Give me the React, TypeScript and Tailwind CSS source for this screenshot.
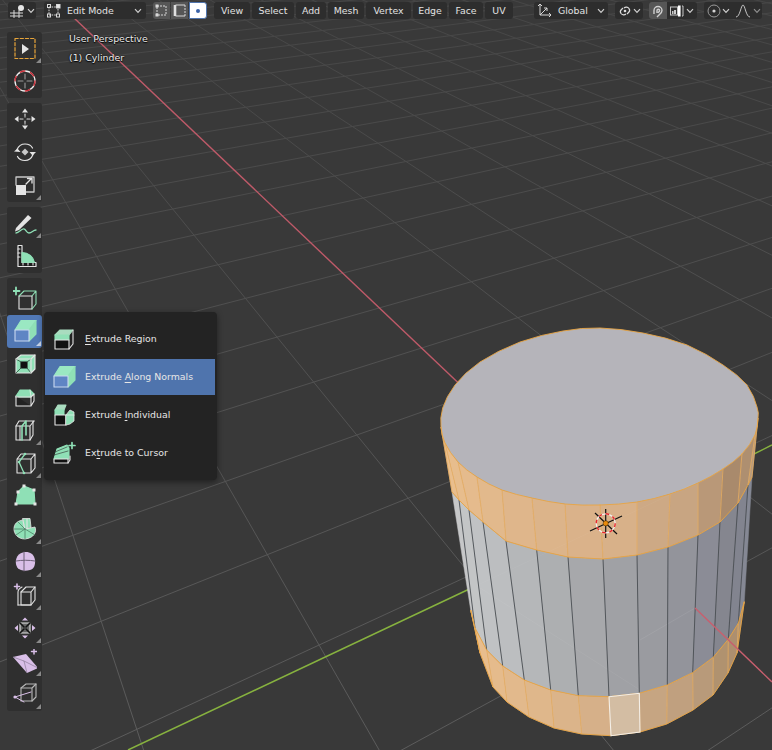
import React from "react";

const W = "#e4e4e4";
const M = "#8fe0b6";
const L = "#d9bfe8";

const VPR: [number, number] = [-175, -218];
const VPG: [number, number] = [2120, -188];

function greenPoint(t: number): [number, number] {
  const x = 606.5 - (118.7 * t) / (1 - 0.0784 * t);
  return [x, 523 - 0.47 * (x - 606.5)];
}
function redPoint(v: number): [number, number] {
  const x = -175 + 781.5 / v;
  return [x, 523 + 0.948 * (x - 606.5)];
}
function ext(vp: [number, number], p: [number, number]) {
  return { x1: vp[0], y1: vp[1], x2: vp[0] + (p[0] - vp[0]) * 6, y2: vp[1] + (p[1] - vp[1]) * 6 };
}

const gridA: any[] = [];
for (let t = -45; t <= 5; t++) if (t !== 0) gridA.push(ext(VPR, greenPoint(t)));
const gridB: any[] = [];
for (let j = -4; j <= 70; j++) gridB.push(ext(VPG, redPoint(1.01 + 0.0998 * j)));

type P = [number, number];
const R: P[] = [[441,427],[445,443],[458,462],[477,477],[502,490],[532,498],[565,504],[600,504],[637,502],[670,494],[698,483],[723,468],[742,453],[755,435],[758,418]];
const T: P[] = [[452,492],[459,500],[469,510],[483,522],[506,541],[536.7,550],[568,557],[603,559],[637,555],[668,547],[698,535],[720,522],[738,503],[748,485],[752,477]];
const B: P[] = [[470.7,610],[475,628],[486.7,650],[502.7,666],[524.3,680],[550.7,690],[578.3,695.7],[609,696.7],[639.3,693.3],[667.3,685],[692.7,672.7],[713.3,657.3],[728.3,639.3],[738.3,623.3],[744.3,601.7]];
const C: P[] = [[470.7,610],[480,653],[493,687],[507,702],[529,717],[554,728],[581.7,734],[611,735.7],[640,732],[666.7,724],[693,710],[713,695],[728,673],[737,653],[744.3,601.7]];
const topCtrl: P[] = [[441,427],[442.7,408],[455,385],[480,362],[520,342],[563,331],[600,328],[643,333],[687,345],[723,365],[747,385],[757,407],[758,418],[755,435],[742,454],[723,469],[698,483],[670,494],[637,502],[600,505],[565,504],[532,498],[502,490],[477,477],[458,462],[445,443]];

function smoothRing(a: P[]): P[] {
  const out: P[] = [];
  const n = a.length;
  for (let i = 0; i < n; i++) {
    const p0 = a[(i - 1 + n) % n];
    const p1 = a[i];
    const p2 = a[(i + 1) % n];
    const p3 = a[(i + 2) % n];
    out.push(p1);
    out.push([(-p0[0] + 9 * p1[0] + 9 * p2[0] - p3[0]) / 16, (-p0[1] + 9 * p1[1] + 9 * p2[1] - p3[1]) / 16]);
  }
  return out;
}
const topRim = smoothRing(topCtrl);

const bandCols = ["#e9be8d","#e7bd8d","#e5bb8d","#e2b98c","#dfb68b","#dcb48a","#dab28a","#d8b189","#cda985","#c8a582","#b99878","#a98a6c","#ae8f70","#b79a7c"];
const bodyCols = ["#c6c7c8","#c3c5c6","#c0c2c4","#bcbec0","#b5b7b9","#adafb1","#a7a8ab","#a0a1a5","#9a9ba0","#93949b","#8b8c96","#85868f","#82848f","#858894"];
const lowCols = ["#eabf8e","#e8bd8d","#e5bb8c","#e2b98c","#dfb78b","#dbb48a","#d6b089","#d3bda3","#c6a582","#c0a07f","#b89a7a","#b0926f","#ad8f6f","#b09372"];

const pts = (a: P[]) => a.map((p) => p.join(",")).join(" ");

function Scene() {
  return (
    <svg className="absolute inset-0" width="772" height="750" viewBox="0 0 772 750">
      <defs>
        <linearGradient id="gridFade" gradientUnits="userSpaceOnUse" x1="0" y1="0" x2="0" y2="750">
          <stop offset="0" stopColor="#464646" />
          <stop offset="0.45" stopColor="#505050" />
          <stop offset="1" stopColor="#5c5c5c" />
        </linearGradient>
      </defs>
      <g stroke="url(#gridFade)" strokeWidth="1">
        {gridA.map((l, i) => <line key={i} {...l} />)}
        {gridB.map((l, i) => <line key={i} {...l} />)}
      </g>
      <line x1="73" y1="17" x2="470" y2="394" stroke="#bf5a69" strokeWidth="1.4" />
      <line x1="128" y1="750" x2="480" y2="584" stroke="#87b23f" strokeWidth="1.5" />
      <line x1="750" y1="456" x2="772" y2="445" stroke="#87b23f" strokeWidth="1.5" />

      {bodyCols.map((c, i) => (
        <polygon key={i} points={pts([T[i], T[i + 1], B[i + 1], B[i]])} fill={c} stroke={c} strokeWidth="0.5" />
      ))}
      {bandCols.map((c, i) => (
        <polygon key={i} points={pts([R[i], R[i + 1], T[i + 1], T[i]])} fill={c} stroke={c} strokeWidth="0.5" />
      ))}
      {lowCols.map((c, i) => (
        <polygon key={i} points={pts([B[i], B[i + 1], C[i + 1], C[i]])} fill={c} stroke={c} strokeWidth="0.5" />
      ))}
      <polygon points={pts(topRim)} fill="#b5b4ba" />

      <line x1="480" y1="584" x2="695" y2="483" stroke="#ffffff" strokeOpacity="0.04" />
      <line x1="477" y1="586" x2="640" y2="690" stroke="#ffffff" strokeOpacity="0.05" />
      <line x1="640" y1="640" x2="695" y2="608" stroke="#ffffff" strokeOpacity="0.07" />

      <g stroke="#4b4f54" strokeWidth="0.9">
        {T.map((p, i) => (i > 0 && i < T.length - 1 ? <line key={i} x1={p[0]} y1={p[1]} x2={B[i][0]} y2={B[i][1]} /> : null))}
      </g>
      <g stroke="#e9ae62" strokeWidth="0.8" fill="none">
        {R.map((p, i) => <line key={i} x1={p[0]} y1={p[1]} x2={T[i][0]} y2={T[i][1]} />)}
        {B.map((p, i) => <line key={i} x1={p[0]} y1={p[1]} x2={C[i][0]} y2={C[i][1]} />)}
      </g>
      <g stroke="#e9a543" strokeWidth="0.9" fill="none">
        <polyline points={pts(T)} />
        <polyline points={pts(B)} />
        <polyline points={pts(C)} />
        <polygon points={pts(topRim)} />
      </g>
      <polygon points={pts([B[7], B[8], C[8], C[7]])} fill="#d3bda3" stroke="#f4efe8" strokeWidth="1.1" />

      <line x1="695" y1="608" x2="772" y2="682" stroke="#c95f6e" strokeWidth="1.4" />

      <g>
        <g stroke="#111" strokeWidth="1.2">
          <line x1="605.7" y1="509" x2="605.7" y2="538" />
          <line x1="590" y1="531" x2="622" y2="516" />
          <line x1="595" y1="513" x2="617" y2="534" />
        </g>
        <circle cx="605.7" cy="523.3" r="9.5" fill="none" stroke="#f2f2f2" strokeWidth="1.3" />
        <circle cx="605.7" cy="523.3" r="9.5" fill="none" stroke="#e8262a" strokeWidth="1.4" strokeDasharray="3.7 3.7" />
        <circle cx="605.7" cy="523.3" r="2.6" fill="#e88a0c" stroke="#3a2500" strokeWidth="0.5" />
      </g>
    </svg>
  );
}

function Ic({ children, s = 24 }: { children: React.ReactNode; s?: number }) {
  return (
    <svg width={s} height={s} viewBox="0 0 24 24" fill="none" stroke={W} strokeWidth="1.1" strokeLinejoin="round" strokeLinecap="round">
      {children}
    </svg>
  );
}

function Chevron({ className = "" }: { className?: string }) {
  return (
    <svg width="8" height="6" viewBox="0 0 8 6" fill="none" stroke="#cfcfcf" strokeWidth="1.2" className={className}>
      <path d="M1 1.2 L4 4.4 L7 1.2" />
    </svg>
  );
}

const Select = () => (
  <Ic>
    <rect x="2" y="2.5" width="20" height="20" stroke="#e8a53a" strokeWidth="1.2" strokeDasharray="3.2 2" />
    <polygon points="9,8 9,18 16,13" fill={W} stroke="none" />
  </Ic>
);
const Cursor3D = () => (
  <Ic>
    <circle cx="12" cy="12" r="10" stroke="#f0f0f0" strokeWidth="1.3" />
    <circle cx="12" cy="12" r="10" stroke="#c92b36" strokeWidth="1.4" strokeDasharray="4.6 5.9" />
    <path d="M12 5v5M12 14v5M5 12h5M14 12h5" stroke="#9a9a9a" />
  </Ic>
);
const Move = () => (
  <Ic>
    <path d="M12 1.5l3 4h-6zM12 22.5l-3-4h6zM1.5 12l4-3v6zM22.5 12l-4 3v-6z" fill={W} stroke="none" />
    <path d="M12 7v3M12 14v3M7 12h3M14 12h3" strokeDasharray="1.5 1" />
  </Ic>
);
const Rotate = () => (
  <Ic>
    <path d="M4 9.5C6 5 9 4 12 4s6 1 7.5 4M20 14.5c-2 5-5 6-8 6s-6-1-7.5-4" strokeWidth="1.2" />
    <path d="M1 11.5l3.5-3 3 3.5zM23 12l-3.5 3.5-3-3.5z" fill={W} stroke="none" />
    <path d="M12 8.5l3.5 3.5-3.5 3.5-3.5-3.5z" fill="#c9c9c9" stroke="none" />
  </Ic>
);
const Scale = () => (
  <Ic>
    <path d="M3 12V4h18v15h-8" stroke="#c8c8c8" strokeWidth="1.3" />
    <rect x="3" y="12" width="10" height="10" fill={W} stroke="none" />
    <path d="M13 11l5-5M14.5 5.5H19V10" strokeWidth="1.3" />
  </Ic>
);
const Annotate = () => (
  <Ic>
    <path d="M3 17L15 4l3.5 3L6 19l-4 1.5z" fill={W} stroke="none" />
    <path d="M3 22c3 0 4-3 7-4s3 4 6 4 4-3 7-3" stroke={M} strokeWidth="1.3" />
  </Ic>
);
const Measure = () => (
  <Ic>
    <path d="M5 1.5h4v17h14v4H5z" fill="#1e1e1e" stroke={W} strokeWidth="1.2" />
    <path d="M9 8.5c6.5 0 11.5 4.5 12.5 10H9z" fill={M} stroke={M} />
    <path d="M5 5h2M5 9h2M5 13h2M10 21v-2M15 21v-2M20 21v-2" />
  </Ic>
);
const AddCube = () => (
  <Ic>
    <path d="M3 1.5v7M-0.5 5h7" stroke={M} strokeWidth="1.8" />
    <path d="M6 10h13v13H6z" stroke={W} />
    <path d="M6 10l5-5h12l-4 5M19 23l4-5V5" stroke={M} strokeWidth="1.1" />
  </Ic>
);
const Extrude = () => (
  <Ic>
    <polygon points="2,11 8,1.5 23,1.5 16,11" fill="#9ae8c2" stroke="#9ae8c2" />
    <polygon points="16,11 23,1.5 23,15 16,22" fill={M} stroke={M} />
    <rect x="2" y="11" width="14" height="11" fill="#5f85c4" stroke="#c8d8f0" />
  </Ic>
);
const ExtrudeRegion = () => (
  <Ic>
    <polygon points="3,8 8,3 21,3 17,8" fill="#a9dcbf" stroke="#a9dcbf" />
    <rect x="3" y="8" width="14" height="5" fill={M} stroke={M} />
    <rect x="3" y="13" width="14" height="9" fill="#111" stroke={W} />
    <path d="M17 22l4-5V3" stroke={W} />
  </Ic>
);
const ExtrudeInd = () => (
  <Ic>
    <polygon points="3,7 6,2 14,2 12,7" fill="#a9dcbf" stroke="#a9dcbf" />
    <rect x="3" y="7" width="9" height="5" fill={M} stroke={M} />
    <rect x="3" y="12" width="11" height="10" fill="#111" stroke={W} />
    <polygon points="14,12 18,7 22,9 22,18 18,21 14,22" fill={M} stroke={W} strokeWidth="0.8" />
    <path d="M14 12h8" stroke="#cfeedd" />
  </Ic>
);
const ExtrudeCur = () => (
  <Ic>
    <path d="M20 1.5v6M17 4.5h6" stroke={M} strokeWidth="1.7" />
    <path d="M2 18L5 8l10-4 2 3 0 11z" fill={M} stroke={M} />
    <path d="M2 14l14-4M3 11l12-5" stroke="#2e2e2e" strokeWidth="0.6" />
    <path d="M2 18h14v4H2z" fill="#111" stroke={W} />
    <path d="M16 22l2-3v-4" stroke={W} />
  </Ic>
);
const Inset = () => (
  <Ic>
    <polygon points="3,7 8,3 22,3 22,17 18,21 3,21" fill={M} stroke={W} />
    <rect x="8" y="10" width="6" height="6" fill="#111" stroke="#111" />
    <path d="M3 7l5 3M18 21l-4-5M18 7l-4 3M3 21l5-5" stroke="#2e4d3c" strokeWidth="0.8" />
    <path d="M3 7h15v14M18 7l4-4" stroke={W} />
  </Ic>
);
const Bevel = () => (
  <Ic>
    <path d="M3 11l4-6h10l4 4-3 3H3z" fill={M} stroke={M} />
    <path d="M17 5l1 7" stroke="#cfeedd" />
    <path d="M3 11v10h15V12l3-3v7l-3 5" stroke={W} fill="#222" />
    <path d="M3 12h15" stroke={W} />
  </Ic>
);
const LoopCut = () => (
  <Ic>
    <path d="M3 8l3-5h15l-1 0v14l-3 5H3z" stroke={W} />
    <path d="M3 8h14v14M17 8l4-5" stroke={W} />
    <path d="M9 22V8l4-5v14" stroke={M} strokeWidth="1.6" />
    <path d="M7 22V8" stroke={W} />
  </Ic>
);
const Knife = () => (
  <Ic>
    <path d="M4 8h14v14H4zM4 8l4-5h14v14l-4 5M18 8l4-5" stroke={W} />
    <path d="M12 3L6 11l5 11" stroke={M} strokeWidth="1.3" />
    <circle cx="12" cy="3" r="1.3" fill={M} stroke="none" />
    <circle cx="6" cy="11" r="1.3" fill={M} stroke="none" />
    <circle cx="11" cy="22" r="1.3" fill={M} stroke="none" />
  </Ic>
);
const PolyBuild = () => (
  <Ic>
    <polygon points="11,2 21,6 22,20 3,20 5,8" fill={M} stroke={M} />
    <g fill={W} stroke="none">
      <rect x="9.5" y="0.5" width="3" height="3" />
      <rect x="19.5" y="4.5" width="3" height="3" />
      <rect x="20.5" y="18.5" width="3" height="3" />
      <rect x="1.5" y="18.5" width="3" height="3" />
      <rect x="3.5" y="6.5" width="3" height="3" />
    </g>
  </Ic>
);
const Spin = () => (
  <Ic>
    <path d="M12 12L9.5 1.5H17L18 10zM12 12l10-2c2 5-1 11-10 12C5 22 1 17 1 12S4 4 9.5 3z" fill={M} stroke={W} strokeWidth="0.8" />
    <path d="M12 12L22 18M12 12l0 10M12 12L3 18M12 12H1M12 12L5 5" stroke="#4d7f65" strokeWidth="0.8" />
    <path d="M14 2v9" stroke={W} />
  </Ic>
);
const Smooth = () => (
  <Ic>
    <path d="M3 10C4 4 9 2 13 2s8 2 9 8c.5 5-1 9-5 10s-8 1-11-1-3.5-6-3-9z" fill={L} stroke="none" />
    <path d="M3 11c6-1 13-1 19 0M11 2v19" stroke="#6d6077" strokeWidth="1" />
  </Ic>
);
const Slide = () => (
  <Ic>
    <path d="M4 1v5M1.5 3.5h5" stroke={L} strokeWidth="1.6" />
    <path d="M5 22V9c0-2 2-4 4-5M8 22V9l5-5h9v13l-4 5z" stroke={W} />
    <path d="M8 9h10v13H5M18 9l4-5" stroke={W} />
  </Ic>
);
const Shrink = () => (
  <Ic>
    <path d="M7 7h10v10H7z" fill="#666" stroke={W} />
    <path d="M7 7l4 4M17 7l-4 4M7 17l4-4M17 17l-4-4" stroke="#111" strokeWidth="1.6" />
    <path d="M12 1.5l3 3H9zM12 22.5l-3-3h6zM1.5 12l3.5-3v6zM22.5 12l-3.5 3V9z" fill={L} stroke="none" />
  </Ic>
);
const Shear = () => (
  <Ic>
    <path d="M21 0v5M18.5 2.5h6" stroke={L} strokeWidth="1.5" />
    <polygon points="0,8 13,5 25,19 14,24" fill={L} stroke="none" />
    <path d="M0 8l11 4 3 12M11 12l14 7" stroke="#8d7d98" strokeWidth="0.7" />
  </Ic>
);
const Rip = () => (
  <Ic>
    <path d="M8 6l5-4h10v13l-4 4H8z" stroke="#b8b8b8" />
    <path d="M8 6h11v13M19 6l4-4" stroke="#b8b8b8" />
    <path d="M2 15l16-5M2 15l9 5" stroke={L} strokeWidth="1" />
    <circle cx="2" cy="15" r="1.6" fill={L} stroke="none" />
  </Ic>
);

function Tool({ children, corner, active }: { children: React.ReactNode; corner?: boolean; active?: boolean }) {
  return (
    <div className={`relative h-[33px] pb-[2px] flex items-center justify-center ${active ? "bg-[#5178b5] rounded-[3px]" : ""}`}>
      {children}
      {corner ? (
        <svg width="5" height="5" viewBox="0 0 5 5" className="absolute right-[1px] bottom-[2px]">
          <polygon points="5,0 5,5 0,5" fill={active ? "#c8d4e8" : "#8a8a8a"} />
        </svg>
      ) : null}
    </div>
  );
}

function Group({ children, className = "" }: { children: React.ReactNode; className?: string }) {
  return <div className={`w-[35px] bg-[#2f2f2f] rounded-[3px] flex flex-col ${className}`}>{children}</div>;
}

function Toolbar() {
  return (
    <div className="flex flex-col gap-[5px] pt-[13px] pl-[7px] w-[69px] shrink-0">
      <Group>
        <Tool corner><Select /></Tool>
        <Tool><Cursor3D /></Tool>
      </Group>
      <Group>
        <Tool><Move /></Tool>
        <Tool><Rotate /></Tool>
        <Tool corner><Scale /></Tool>
      </Group>
      <Group>
        <Tool corner><Annotate /></Tool>
        <Tool><Measure /></Tool>
      </Group>
      <Group className="pt-[4px]">
        <Tool><AddCube /></Tool>
        <Tool corner active><Extrude /></Tool>
        <Tool><Inset /></Tool>
        <Tool><Bevel /></Tool>
        <Tool corner><LoopCut /></Tool>
        <Tool corner><Knife /></Tool>
        <Tool><PolyBuild /></Tool>
        <Tool corner><Spin /></Tool>
        <Tool corner><Smooth /></Tool>
        <Tool corner><Slide /></Tool>
        <Tool corner><Shrink /></Tool>
        <Tool corner><Shear /></Tool>
        <Tool corner><Rip /></Tool>
      </Group>
    </div>
  );
}

function Item({ icon, active, children }: { icon: React.ReactNode; active?: boolean; children: React.ReactNode }) {
  return (
    <div className={`h-[36px] mb-[2px] flex items-center pl-[7px] ${active ? "bg-[#4f74ad]" : ""}`}>
      <span className="w-[33px] flex items-center">{icon}</span>
      <span className="text-[#e6e6e6]">{children}</span>
    </div>
  );
}

function Popup() {
  return (
    <div className="absolute left-[44px] top-[312px] w-[173px] h-[168px] bg-[#232323] rounded-[4px] pt-[9px] pl-[1px] pr-[2px] shadow-[0_2px_6px_rgba(0,0,0,0.45)]">
      <Item icon={<ExtrudeRegion />}><u className="underline-offset-2">E</u>xtrude Region</Item>
      <Item active icon={<Extrude />}>Extrude <u className="underline-offset-2">A</u>long Normals</Item>
      <Item icon={<ExtrudeInd />}>Extrude <u className="underline-offset-2">I</u>ndividual</Item>
      <Item icon={<ExtrudeCur />}>Ex<u className="underline-offset-2">t</u>rude to Cursor</Item>
    </div>
  );
}

function Menu({ w, children }: { w: string; children: React.ReactNode }) {
  return <div className={`${w} h-[17px] bg-[#2d2d2d] rounded-[3px] flex items-center justify-center text-[#e2e2e2]`}>{children}</div>;
}

function Header() {
  return (
    <div className="relative flex items-center h-[19px] pt-[2px] pl-[8px]">
      <div className="w-[28px] h-[17px] bg-[#2d2d2d] rounded-[3px] flex items-center justify-center gap-[1px]">
        <svg width="16" height="14" viewBox="0 0 16 14" fill="none" stroke="#d8d8d8" strokeWidth="1">
          <path d="M0 9h13M0 12h13M4 6v8M9 6v8" />
          <circle cx="11" cy="4" r="3" fill="#e6e6e6" stroke="none" />
        </svg>
        <Chevron />
      </div>
      <div className="ml-[8px] w-[102px] h-[17px] bg-[#2d2d2d] rounded-[3px] flex items-center pl-[3px] pr-[4px] text-[#e2e2e2]">
        <svg width="14" height="14" viewBox="0 0 14 14" fill="none" stroke="#d8d8d8" strokeWidth="1">
          <path d="M2 3h8M2 11h8M2 3v8M11 5v5" strokeDasharray="1.6 1" />
          <rect x="0.5" y="0.5" width="3" height="3" />
          <rect x="9.5" y="0.5" width="3.5" height="3.5" fill="#e6e6e6" />
          <rect x="0.5" y="10" width="3" height="3" />
          <rect x="9.5" y="10" width="3" height="3" />
        </svg>
        <span className="ml-[6px] flex-1">Edit Mode</span>
        <Chevron />
      </div>
      <div className="ml-[7px] flex gap-[1px]">
        <div className="w-[17px] h-[17px] bg-[#565656] rounded-l-[3px] flex items-center justify-center">
          <svg width="13" height="13" viewBox="0 0 13 13" fill="none" stroke="#d8d8d8">
            <path d="M2 2h9v9H2z" strokeDasharray="2 1" />
            <rect x="0.5" y="0.5" width="3" height="3" fill="#d8d8d8" stroke="none" />
            <rect x="0.5" y="9.5" width="3" height="3" fill="#d8d8d8" stroke="none" />
          </svg>
        </div>
        <div className="w-[17px] h-[17px] bg-[#565656] flex items-center justify-center">
          <svg width="13" height="13" viewBox="0 0 13 13" fill="none" stroke="#d8d8d8">
            <path d="M2.5 1H12M2.5 12H12" />
            <path d="M2 1v11" strokeWidth="2.6" stroke="#e0e0e0" />
            <path d="M12 1v11" strokeDasharray="2 1" />
          </svg>
        </div>
        <div className="w-[18px] h-[17px] bg-white border-[1.5px] border-[#4f74ad] rounded-r-[3px] flex items-center justify-center">
          <span className="w-[4px] h-[4px] rounded-full bg-[#3a62a8]" />
        </div>
      </div>
      <div className="ml-[7px] flex gap-[2px]">
        <Menu w="w-[36px]">View</Menu>
        <Menu w="w-[42px]">Select</Menu>
        <Menu w="w-[30px]">Add</Menu>
        <Menu w="w-[36px]">Mesh</Menu>
        <Menu w="w-[45px]">Vertex</Menu>
        <Menu w="w-[34px]">Edge</Menu>
        <Menu w="w-[34px]">Face</Menu>
        <Menu w="w-[28px]">UV</Menu>
      </div>
      <div className="ml-[21px] w-[74px] h-[17px] bg-[#2d2d2d] rounded-[3px] flex items-center pl-[2px] pr-[3px] text-[#e2e2e2]">
        <svg width="16" height="16" viewBox="0 0 16 16" fill="none" stroke="#d8d8d8" strokeWidth="1">
          <path d="M4 1v11h11M4 12l7-7M2 3l2-2 2 2M13 10l2 2-2 2M8 5h3v3" />
        </svg>
        <span className="ml-[6px] flex-1">Global</span>
        <Chevron />
      </div>
      <div className="ml-[7px] w-[28px] h-[17px] bg-[#2d2d2d] rounded-[3px] flex items-center justify-center gap-[1px]">
        <svg width="14" height="14" viewBox="0 0 14 14" fill="none" stroke="#dcdcdc" strokeWidth="1.2">
          <path d="M6 4a3.5 3.5 0 0 1 5 .5 3 3 0 0 1-.5 4L9 10M8 10a3.5 3.5 0 0 1-5-.5 3 3 0 0 1 .5-4L5 4" />
          <circle cx="7" cy="7" r="1.3" fill="#dcdcdc" stroke="none" />
        </svg>
        <Chevron />
      </div>
      <div className="ml-[6px] w-[48px] h-[17px] bg-[#2d2d2d] rounded-[3px] flex items-center overflow-hidden">
        <div className="w-[18px] h-[17px] bg-[#565656] flex items-center justify-center">
          <svg width="14" height="14" viewBox="0 0 14 14" fill="none" stroke="#cfcfcf" strokeWidth="1.4">
            <path d="M3 10V6.5a4 4 0 0 1 8 0c0 2-1.5 3-3 4.5L6 13M6 9V6.5a1.3 1.3 0 0 1 2.6 0c0 1-.8 1.5-1.6 2.3" />
          </svg>
        </div>
        <div className="flex items-center pl-[3px] gap-[2px]">
          <svg width="14" height="12" viewBox="0 0 14 12" fill="none" stroke="#c8c8c8" strokeWidth="1">
            <rect x="0.5" y="2" width="7" height="8" />
            <path d="M2 9V6h1.5v3M4 9V5h2v4" fill="#c8c8c8" stroke="none" />
            <rect x="8" y="0.5" width="2.6" height="11" fill="#fff" stroke="none" />
            <path d="M12 1h1v10h-1" />
          </svg>
          <Chevron />
        </div>
      </div>
      <div className="ml-[7px] w-[58px] h-[17px] bg-[#2d2d2d] rounded-[3px] flex items-center pl-[3px] gap-[1px]">
        <svg width="14" height="14" viewBox="0 0 14 14" fill="none" stroke="#9a9a9a" strokeWidth="1">
          <circle cx="7" cy="7" r="6" />
          <circle cx="7" cy="7" r="1.6" fill="#d4d4d4" stroke="none" />
        </svg>
        <Chevron />
        <svg width="16" height="14" viewBox="0 0 16 14" fill="none" stroke="#c4c4c4" strokeWidth="1" className="ml-[4px]">
          <path d="M1 13C5 13 6 1 8 1s3 12 7 12" />
        </svg>
        <Chevron className="ml-[1px] opacity-60" />
      </div>
    </div>
  );
}

export default function App() {
  return (
    <div className="relative w-[772px] h-[750px] overflow-hidden bg-[#393939] font-['DejaVu_Sans',sans-serif] text-[9.4px] leading-none">
      <Scene />
      <Header />
      <div className="relative flex">
        <Toolbar />
        <div className="pt-[15px] text-[#ececec] [text-shadow:0_0_2px_#000,0_1px_1px_#000]">
          <div className="h-[19px]">User Perspective</div>
          <div>(1) Cylinder</div>
        </div>
      </div>
      <Popup />
    </div>
  );
}
